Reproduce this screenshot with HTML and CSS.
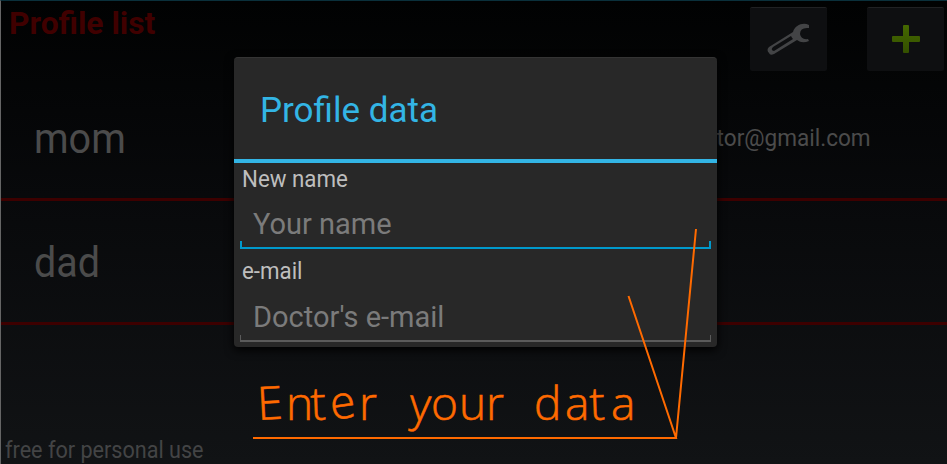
FILE: index.html
```html
<!DOCTYPE html>
<html lang="en">
<head>
<meta charset="utf-8">
<title>Profile list</title>
<link rel="stylesheet" href="styles.css">
</head>
<body>
<main class="screen">
  <header class="topbar">
    <h1 class="heading">Profile list</h1>
    <div class="actions">
      <button class="tool" aria-label="Settings">
        <svg width="46" height="36" viewBox="0 0 46 36" fill="none">
          <path d="M43 3C37 0 29 3 27 10L3 25Q0 28 3 31Q4 34 8 32L31 18Q36 22 43 19L42 17Q35 18 34 12Q34 5 43 6Z" fill="#434446"/>
          <path d="M25 14L7 25Q4 28 8 29L27 17Q26 16 25 14Z" fill="#0e0f11"/>
        </svg>
      </button>
      <button class="tool" aria-label="Add">
        <svg class="plus" width="28" height="28" viewBox="0 0 28 28">
          <defs><linearGradient id="leaf" x1="0" y1="0" x2="0" y2="1"><stop offset="0" stop-color="#456800"/><stop offset="1" stop-color="#345000"/></linearGradient></defs>
          <path d="M11 1q0-1 1-1h4q1 0 1 1v10h10q1 0 1 1v4q0 1-1 1H17v10q0 1-1 1h-4q-1 0-1-1V17H1q-1 0-1-1v-4q0-1 1-1h10z" fill="url(#leaf)"/>
        </svg>
      </button>
    </div>
  </header>
  <section class="row first"><span class="name">mom</span><span class="mail">doctor@gmail.com</span></section>
  <section class="row"><span class="name">dad</span></section>
  <footer class="foot"><span>free for personal use</span></footer>
</main>
<section class="dialog">
  <h2 class="title"><span>Profile data</span></h2>
  <div class="label"><span>New name</span></div>
  <div class="field active"><span>Your name</span></div>
  <div class="label second"><span>e-mail</span></div>
  <div class="field"><span>Doctor's e-mail</span></div>
</section>
<svg class="note" width="947" height="464" viewBox="0 0 947 464">
  <path d="M253 438H676L628.500 296M676 438L696 229" fill="none" stroke="#ff6a00" stroke-width="2"/>
  <g class="hand">
    <text x="258 286 311 332 359" y="420" rotate="-3 0 -2 -8 0">Enter</text>
    <text x="409 431 459 486" y="420" rotate="3 0 0 0">your</text>
    <text x="534 565 590 611" y="420" rotate="0 0 -2 0">data</text>
  </g>
</svg>
</body>
</html>
```
FILE: styles.css
```css
* { box-sizing: border-box; }
body {
  margin: 0;
  width: 947px;
  height: 464px;
  overflow: hidden;
  position: relative;
  background: #000;
  font-family: Roboto, sans-serif;
}
.screen {
  height: 464px;
  display: flex;
  flex-direction: column;
  border-top: 1px solid #0a303b;
  border-left: 1px solid #656565;
  background: linear-gradient(#010202, #08090b 42%, #111315);
}
.topbar {
  height: 75px;
  display: flex;
  justify-content: space-between;
  align-items: flex-start;
  padding: 6px 3px 0 8px;
}
.heading {
  margin: 0;
  font-size: 31px;
  line-height: 34px;
  font-weight: 700;
  color: #400000;
  transform: scaleX(1.025);
  transform-origin: left;
}
.actions { display: flex; gap: 40px; }
.tool {
  width: 77px;
  height: 64px;
  padding: 0;
  display: flex;
  align-items: center;
  justify-content: center;
  border: 0;
  border-top: 1px solid #202123;
  border-radius: 2px;
  background: #0e0f11;
}
.plus { margin-top: -2px; }
.row {
  height: 124px;
  display: flex;
  align-items: center;
  justify-content: space-between;
  padding: 2px 76px 0 33px;
  border-bottom: 3px solid #3d0000;
  color: #4b4b4b;
}
.first { height: 125px; padding-top: 4px; }
.name { font-size: 42px; line-height: 50px; transform: scaleX(.94); transform-origin: left; }
.mail { font-size: 24px; line-height: 30px; margin-top: -2px; transform: scaleX(.94); transform-origin: right; }
.foot {
  margin-top: auto;
  height: 30px;
  padding-left: 4px;
  font-size: 24px;
  line-height: 32px;
  color: #434445;
}
.foot span, .dialog span { display: inline-block; transform-origin: left; white-space: nowrap; }
.foot span { transform: scaleX(.9); }
.dialog {
  position: absolute;
  left: 234px;
  top: 57px;
  width: 483px;
  height: 290px;
  background: #282828;
  border-top: 1px solid #343434;
  border-radius: 4px;
  box-shadow: 0 3px 10px #000;
}
.title {
  margin: 0;
  height: 105px;
  padding: 0 0 0 26px;
  border-bottom: 4px solid #33b5e5;
  font-size: 35px;
  line-height: 106px;
  font-weight: 400;
  color: #33b5e5;
}
.label {
  height: 33px;
  padding-left: 8px;
  font-size: 23px;
  line-height: 34px;
  color: #bebebe;
}
.label span { transform: scaleX(.97); }
.second { height: 40px; line-height: 46px; }
.field {
  height: 53px;
  margin: 0 6px;
  padding-left: 13px;
  font-size: 29px;
  line-height: 57px;
  color: #7b7b7b;
  background:
    linear-gradient(#5b5b5b, #5b5b5b) 0 100% / 1px 7px no-repeat,
    linear-gradient(#5b5b5b, #5b5b5b) 100% 100% / 1px 7px no-repeat,
    linear-gradient(#5b5b5b, #5b5b5b) 0 100% / 100% 2px no-repeat;
}
.active {
  background:
    linear-gradient(#0099cc, #0099cc) 0 100% / 2px 8px no-repeat,
    linear-gradient(#0099cc, #0099cc) 100% 100% / 2px 8px no-repeat,
    linear-gradient(#0099cc, #0099cc) 0 100% / 100% 2px no-repeat;
}
.note { position: absolute; left: 0; top: 0; pointer-events: none; }
.hand { font-family: "Open Sans", sans-serif; font-size: 46px; font-weight: 300; fill: #ff6a00; stroke: #ff6a00; stroke-width: .6px; }
```
